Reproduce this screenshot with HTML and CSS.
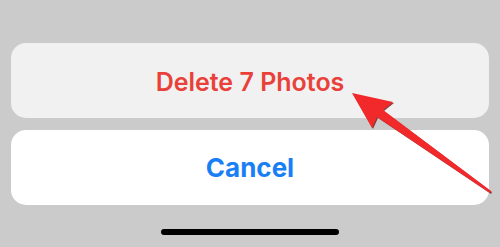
FILE: index.html
```html
<!DOCTYPE html>
<html>
<head>
<meta charset="utf-8">
<link rel="stylesheet" href="styles.css">
</head>
<body>
<div class="sheet">
  <div class="card card-action"><span class="delete">Delete 7 Photos</span></div>
  <div class="card card-cancel"><span class="cancel">Cancel</span></div>
  <div class="home-bar"></div>
</div>
<svg class="arrow" width="500" height="247" viewBox="0 0 500 247">
  <polygon points="353,94 394,103 384,111 492,192 491,194 378,118 373,129" fill="#7a1414" opacity="0.8"/>
  <polygon points="352,93 393,102 383,110 491,191 490,193 377,117 372,128" fill="#f2292b"/>
</svg>
</body>
</html>
```
FILE: styles.css
```css
html, body {
  margin: 0;
  padding: 0;
  background: #cbcbcb;
  width: 500px;
  height: 247px;
  overflow: hidden;
}
.sheet {
  padding: 43px 11px 0 11px;
  display: flex;
  flex-direction: column;
  gap: 12px;
}
.card {
  height: 75px;
  border-radius: 15px;
  display: flex;
  align-items: center;
  justify-content: center;
  font-family: Inter, "Noto Sans", sans-serif;
}
.card-action {
  background: #f1f1f1;
}
.card-cancel {
  background: #ffffff;
}
.delete {
  color: #e9413a;
  font-size: 25px;
  font-weight: 600;
  margin-top: 2px;
}
.cancel {
  color: #1a7ff5;
  font-size: 26px;
  font-weight: 700;
}
.home-bar {
  width: 178px;
  height: 6px;
  border-radius: 3px;
  background: #000;
  align-self: center;
  margin-top: 12px;
}
.arrow {
  position: absolute;
  left: 0;
  top: 0;
}
```
